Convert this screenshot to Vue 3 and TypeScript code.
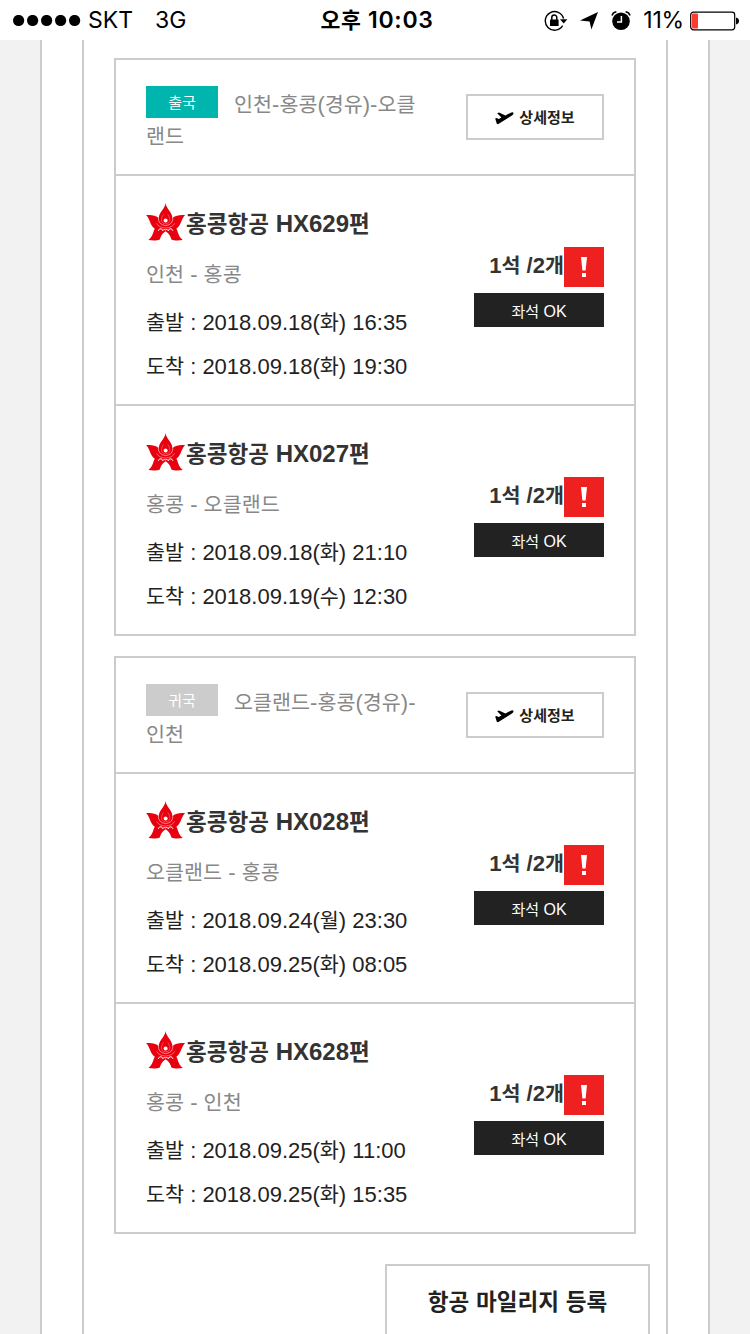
<script setup lang="ts">
import { h, type FunctionalComponent } from 'vue'

interface Flight {
  code: string
  route: string
  depart: string
  arrive: string
}

interface Journey {
  kind: 'out' | 'back'
  label: string
  lines: string[]
  flights: Flight[]
}

const journeys: Journey[] = [
  {
    kind: 'out',
    label: '출국',
    lines: ['인천-홍콩(경유)-오클', '랜드'],
    flights: [
      { code: 'HX629', route: '인천 - 홍콩', depart: '2018.09.18(화) 16:35', arrive: '2018.09.18(화) 19:30' },
      { code: 'HX027', route: '홍콩 - 오클랜드', depart: '2018.09.18(화) 21:10', arrive: '2018.09.19(수) 12:30' },
    ],
  },
  {
    kind: 'back',
    label: '귀국',
    lines: ['오클랜드-홍콩(경유)-', '인천'],
    flights: [
      { code: 'HX028', route: '오클랜드 - 홍콩', depart: '2018.09.24(월) 23:30', arrive: '2018.09.25(화) 08:05' },
      { code: 'HX628', route: '홍콩 - 인천', depart: '2018.09.25(화) 11:00', arrive: '2018.09.25(화) 15:35' },
    ],
  },
]

// Sets Hangul runs slightly smaller than the Latin text around them.
const Mixed: FunctionalComponent<{ text: string }> = (props) =>
  h(
    'span',
    { class: 'mixed' },
    props.text
      .split(/([\uac00-\ud7a3]+)/)
      .filter((run) => run !== '')
      .map((run) => (/[\uac00-\ud7a3]/.test(run) ? h('span', { class: 'ko' }, run) : run)),
  )
Mixed.props = ['text']
</script>

<template>
  <div class="screen">
    <header class="status">
      <div class="status-left">
        <svg class="dots" width="68" height="12" viewBox="0 0 68 12">
          <circle v-for="n in 5" :key="n" :cx="n * 14 - 8.4" cy="5.5" r="5.6" />
        </svg>
        <span class="carrier">SKT</span>
        <span class="network">3G</span>
      </div>
      <div class="clock"><Mixed text="오후 10:03" /></div>
      <div class="status-right">
        <svg class="lock" width="24" height="22" viewBox="0 0 24 22">
          <path d="M18.6 15.6A9.3 9.3 0 1 1 19.6 8.6" fill="none" stroke="#000" stroke-width="1.4" />
          <path d="M16 9.2h7.4l-3.7 4.4z" />
          <rect x="6" y="9.6" width="8.6" height="6.4" rx=".5" />
          <path d="M7.8 10V7.6a2.5 2.5 0 0 1 5 0V10" fill="none" stroke="#000" stroke-width="1.5" />
        </svg>
        <svg class="arrow" width="18" height="18" viewBox="0 0 18 18">
          <path d="M18 0 11.4 17.6 9.6 9.4 0 8.6z" />
        </svg>
        <svg class="alarm" width="20" height="20" viewBox="0 0 20 20">
          <circle cx="10" cy="10.2" r="8.8" />
          <path d="M1 4.4Q2 1.4 5.4.8M19 4.4Q18 1.4 14.6.8" fill="none" stroke="#000" stroke-width="1.5" />
          <path d="M10.4 5v6H6" fill="none" stroke="#fff" stroke-width="1.5" />
        </svg>
        <span class="percent">11%</span>
        <svg class="battery" width="50" height="20" viewBox="0 0 50 20">
          <rect x=".7" y="1.2" width="44" height="17.6" rx="2.8" fill="#fff" stroke="#000" stroke-width="1.2" />
          <rect x="2" y="2.6" width="6" height="14.8" rx="1" fill="#ff3b30" />
          <path d="M46 6.6c4 .6 4 6.4 0 7z" />
        </svg>
      </div>
    </header>

    <main class="page">
      <div class="outer">
        <div class="inner">
          <section v-for="j in journeys" :key="j.kind" class="journey">
            <div class="head">
              <div class="summary">
                <div class="line">
                  <span class="tag" :class="j.kind"><Mixed :text="j.label" /></span>
                  <Mixed :text="j.lines[0]" />
                </div>
                <div class="line"><Mixed :text="j.lines[1]" /></div>
              </div>
              <button class="detail" type="button">
                <svg width="19" height="14" viewBox="0 0 19 14">
                  <path d="M.2 7.4 1.4 6.9 3.8 8 6.4 6.6 2.2 2.2 4 1.4 10.4 4.5 15.2 2Q17.8.8 18.5 1.9 18.8 3.4 16.6 4.8L6.6 11 3 13.2 1.8 12.8Z" />
                </svg>
                <Mixed text="상세정보" />
              </button>
            </div>

            <article v-for="f in j.flights" :key="f.code" class="flight">
              <div class="info">
                <h2 class="name">
                  <svg class="logo" width="40" height="38" viewBox="0 0 40 38">
                    <path
                      fill="#e8000f"
                      d="M0 12.2C4 11.6 9.4 12 12.4 14.8L19.6 18 26.8 14.8C29.8 12 35.2 11.6 39.2 12.2 35 15.4 35.6 22 30.4 25.8 32.4 29 31.8 33 36.8 37 32 37.8 28 37.6 25.4 36.4 24.6 33.6 23 30.4 19.6 28.2 16.2 30.4 14.6 33.6 13.8 36.4 11.2 37.6 7.2 37.8 2.4 37 7.4 33 6.8 29 8.8 25.8 3.6 22 4.2 15.4 0 12.2Z"
                    />
                    <path
                      fill="#e8000f"
                      d="M19.6 0C20.2 6 26.6 9.4 26.6 16 26.4 20.8 22.8 22.8 19.6 22.8S12.8 20.8 12.6 16C12.6 9.4 19 6 19.6 0Z"
                    />
                    <circle cx="19.6" cy="17.6" r="2" fill="#fff" />
                    <g fill="none" stroke="#fff">
                      <path d="M12.4 14.2Q11.8 21.8 19.6 22.6 27.4 21.8 26.8 14.2" stroke-width=".7" stroke-opacity=".75" />
                      <path d="M17.4 11.4Q13.8 17 16.6 20 19.6 21.8 22.6 20 25.4 17 21.8 11.4" stroke-width=".5" stroke-opacity=".55" />
                      <path d="M10.6 20.4Q13 24.8 19.6 25 26.2 24.8 28.6 20.4" stroke-width=".6" stroke-opacity=".7" />
                      <path d="M12.4 27.8C12.6 25.4 16.6 25 16.6 27.6 18 26.6 19 26.2 19.6 26.8 20.2 26.2 21.2 26.6 22.6 27.6 22.6 25 26.6 25.4 26.8 27.8" stroke-width="1" />
                    </g>
                  </svg><Mixed :text="`홍콩항공 ${f.code}편`" />
                </h2>
                <p class="route"><Mixed :text="f.route" /></p>
                <p class="time"><Mixed :text="`출발 : ${f.depart}`" /></p>
                <p class="time"><Mixed :text="`도착 : ${f.arrive}`" /></p>
              </div>
              <div class="seat">
                <div class="count">
                  <Mixed text="1석 /2개" />
                  <span class="alert">
                    <svg width="8" height="22" viewBox="0 0 8 22">
                      <path d="M1 1h6L5.6 14.6H2.4zM2 17h4v4H2z" fill="#fff" />
                    </svg>
                  </span>
                </div>
                <div class="ok"><Mixed text="좌석 OK" /></div>
              </div>
            </article>
          </section>
          <button class="mileage" type="button"><Mixed text="항공 마일리지 등록" /></button>
        </div>
      </div>
    </main>
  </div>
</template>

<style>
body {
  margin: 0;
  background: #f2f2f2;
}

.mixed {
  white-space: pre;
}

.mixed .ko {
  font-size: 0.94em;
  line-height: 0;
}
</style>

<style scoped>
.screen {
  display: flex;
  flex-direction: column;
  width: 750px;
  height: 1334px;
  overflow: hidden;
  background: #f2f2f2;
  color: #222;
  font-family: 'Liberation Sans', 'Noto Sans CJK KR', sans-serif;
}

.status {
  display: grid;
  grid-template-columns: 1fr auto 1fr;
  flex: none;
  height: 40px;
  align-items: center;
  background: #fff;
  color: #000;
  font: 400 23px/41px Inter, 'Noto Sans CJK KR', sans-serif;
}

.status-left,
.status-right {
  display: flex;
  align-items: center;
}

.status-left {
  padding-left: 13px;
}

.carrier {
  margin-left: 7px;
}

.network {
  margin-left: 22px;
}

.clock {
  padding-left: 4px;
  font-weight: 600;
  letter-spacing: 0.7px;
}

.status-right {
  justify-content: flex-end;
  padding-right: 10px;
}

.arrow {
  margin-left: 12px;
}

.alarm {
  margin-left: 13px;
}

.percent {
  margin-left: 12px;
  letter-spacing: -0.2px;
}

.battery {
  margin-left: 6px;
}

.page {
  flex: 1;
  min-height: 0;
  padding: 0 40px;
}

.outer {
  box-sizing: border-box;
  height: 1294px;
  padding: 0 40px;
  border: solid #ccc;
  border-width: 0 2px;
  background: #fff;
}

.inner {
  box-sizing: border-box;
  display: flex;
  flex-direction: column;
  height: 1294px;
  padding: 18px 16px 0 30px;
  border: solid #ccc;
  border-width: 0 2px;
}

.journey {
  flex: none;
  width: 518px;
  margin-bottom: 20px;
  border: 2px solid #ccc;
}

.head {
  box-sizing: border-box;
  display: flex;
  justify-content: space-between;
  align-items: flex-start;
  height: 114px;
  padding: 26px 30px 0;
}

.line {
  display: flex;
  height: 32px;
  color: #888;
  font-size: 22px;
  line-height: 37px;
}

.tag {
  width: 72px;
  height: 32px;
  margin-right: 16px;
  color: #fff;
  font-size: 16px;
  line-height: 33px;
  text-align: center;
}

.tag.out {
  background: #00b5ad;
}

.tag.back {
  background: #ccc;
}

.detail {
  box-sizing: border-box;
  display: flex;
  align-items: center;
  justify-content: center;
  gap: 5px;
  width: 138px;
  height: 46px;
  margin: 8px 0 0;
  padding: 2px 0 0;
  border: 2px solid #ccc;
  background: #fff;
  color: #222;
  font: 700 16px/40px 'Liberation Sans', 'Noto Sans CJK KR', sans-serif;
}

.flight {
  box-sizing: border-box;
  display: flex;
  justify-content: space-between;
  height: 230px;
  padding: 26px 30px 0;
  border-top: 2px solid #ccc;
}

.name {
  display: flex;
  height: 44px;
  margin: 0;
  color: #333;
  font-size: 24px;
  line-height: 43px;
}

.logo {
  margin-top: 1px;
}

.route,
.time {
  height: 44px;
  margin: 0;
  font-size: 22px;
  line-height: 46px;
}

.route {
  margin: 6px 0 4px;
  color: #888;
}

.seat {
  display: flex;
  flex-direction: column;
  align-items: flex-end;
  padding-top: 45px;
}

.count {
  display: flex;
  color: #333;
  font-size: 22px;
  font-weight: 700;
  line-height: 38px;
}

.alert {
  display: flex;
  align-items: center;
  justify-content: center;
  width: 40px;
  height: 40px;
  background: #ee2020;
}

.ok {
  width: 130px;
  height: 34px;
  margin-top: 6px;
  background: #222;
  color: #fff;
  font-size: 16px;
  line-height: 38px;
  text-align: center;
}

.mileage {
  box-sizing: border-box;
  flex: none;
  align-self: flex-end;
  width: 265px;
  height: 78px;
  margin: 10px 0 0;
  padding: 0 0 3px;
  border: 2px solid #ccc;
  background: #fff;
  color: #222;
  font: 700 24px/71px 'Liberation Sans', 'Noto Sans CJK KR', sans-serif;
}
</style>
